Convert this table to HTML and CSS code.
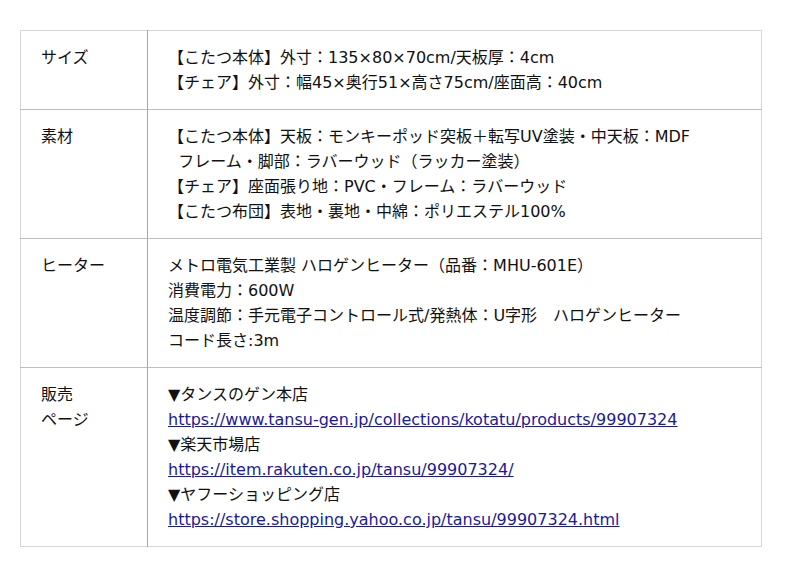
FILE: index.html
```html
<!DOCTYPE html>
<html lang="ja">
<head>
<meta charset="utf-8">
<link rel="stylesheet" href="styles.css">
</head>
<body>
<table class="spec">
  <tr>
    <th>サイズ</th>
    <td>【こたつ本体】外寸：135×80×70cm/天板厚：4cm<br>【チェア】外寸：幅45×奥行51×高さ75cm/座面高：40cm</td>
  </tr>
  <tr>
    <th>素材</th>
    <td>【こたつ本体】天板：モンキーポッド突板＋転写UV塗装・中天板：MDF<br>&nbsp;&nbsp;フレーム・脚部：ラバーウッド（ラッカー塗装）<br>【チェア】座面張り地：PVC・フレーム：ラバーウッド<br>【こたつ布団】表地・裏地・中綿：ポリエステル100%</td>
  </tr>
  <tr>
    <th>ヒーター</th>
    <td>メトロ電気工業製 ハロゲンヒーター（品番：MHU-601E）<br>消費電力：600W<br>温度調節：手元電子コントロール式/発熱体：U字形　ハロゲンヒーター<br>コード長さ:3m</td>
  </tr>
  <tr>
    <th>販売<br>ページ</th>
    <td>▼タンスのゲン本店<br><a href="#">https://www.tansu-gen.jp/collections/kotatu/products/99907324</a><br>▼楽天市場店<br><a href="#">https://item.rakuten.co.jp/tansu/99907324/</a><br>▼ヤフーショッピング店<br><a href="#">https://store.shopping.yahoo.co.jp/tansu/99907324.html</a></td>
  </tr>
</table>
</body>
</html>
```
FILE: styles.css
```css
html, body {
  margin: 0;
  padding: 0;
  background: #fff;
}
body {
  padding: 30px 38px 0 20px;
  font-family: "DejaVu Sans", "Noto Sans CJK JP", sans-serif;
  font-size: 16px;
  line-height: 25px;
  color: #111;
}
.spec {
  width: 742px;
  border-collapse: collapse;
  border: 1px solid #d6d6d6;
}
.spec th, .spec td {
  text-align: left;
  vertical-align: top;
  font-weight: normal;
  padding: 14px 20px;
  border-top: 1px solid #bdbdbd;
}
.spec tr:first-child th, .spec tr:first-child td {
  border-top: 1px solid #d6d6d6;
}
.spec th {
  width: 86px;
  border-right: 1px solid #a8a8a8;
}
.spec a {
  color: #1a1a9c;
  text-decoration: underline;
}
```
